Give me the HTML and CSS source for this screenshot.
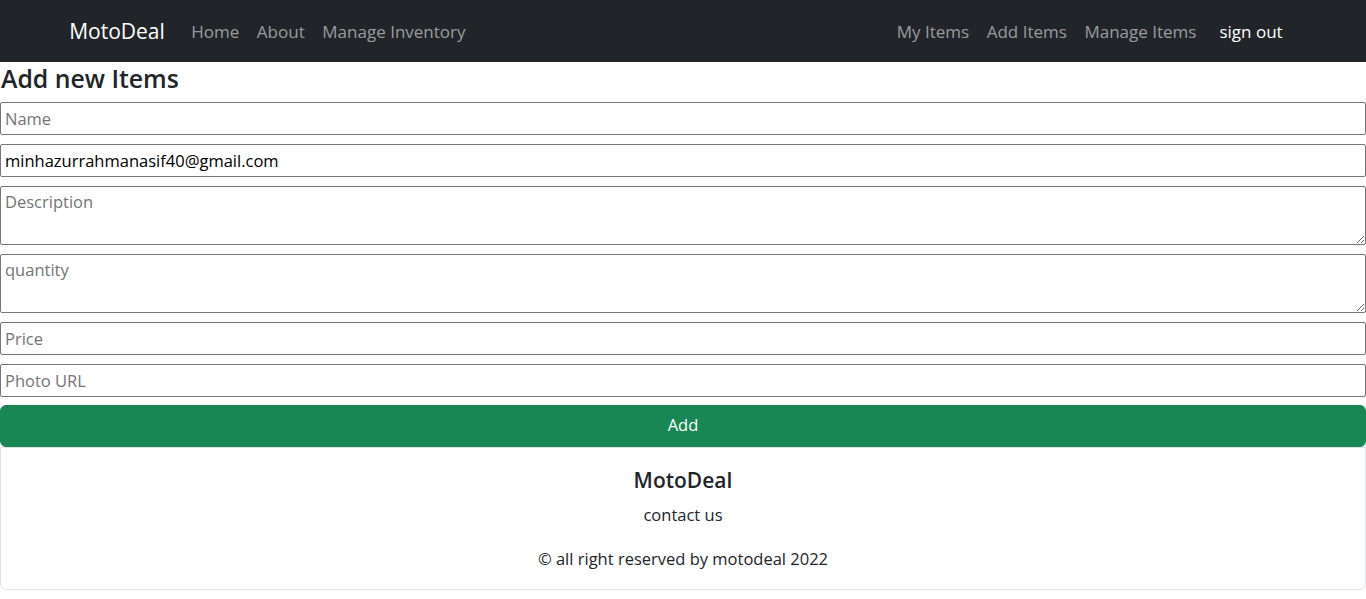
FILE: index.html
```html
<!DOCTYPE html>
<html lang="en">
<head>
<meta charset="utf-8">
<title>MotoDeal - Add new Items</title>
<link rel="stylesheet" href="styles.css">
</head>
<body>
<nav class="navbar">
  <div class="nav-container">
    <a class="brand" href="#">MotoDeal</a>
    <ul class="nav-list">
      <li><a class="nav-link" href="#">Home</a></li>
      <li><a class="nav-link" href="#">About</a></li>
      <li><a class="nav-link" href="#">Manage Inventory</a></li>
    </ul>
    <ul class="nav-list nav-right">
      <li><a class="nav-link" href="#">My Items</a></li>
      <li><a class="nav-link" href="#">Add Items</a></li>
      <li><a class="nav-link" href="#">Manage Items</a></li>
      <li><button class="signout" type="button">sign out</button></li>
    </ul>
  </div>
</nav>
<main class="page">
  <h4 class="title">Add new Items</h4>
  <form class="item-form">
    <input class="field" type="text" placeholder="Name">
    <input class="field" type="email" value="minhazurrahmanasif40@gmail.com">
    <textarea class="field area" placeholder="Description"></textarea>
    <textarea class="field area" placeholder="quantity"></textarea>
    <input class="field" type="text" placeholder="Price">
    <input class="field last-field" type="text" placeholder="Photo URL">
    <button class="add-btn" type="button">Add</button>
  </form>
  <footer class="footer-card">
    <h5 class="footer-title">MotoDeal</h5>
    <p class="footer-text">contact us</p>
    <p class="footer-text last">© all right reserved by motodeal 2022</p>
  </footer>
</main>
</body>
</html>
```
FILE: styles.css
```css
* { box-sizing: border-box; }

html, body {
  margin: 0;
  padding: 0;
}

body {
  font-family: "Open Sans", "Noto Sans", sans-serif;
  font-size: 16.5px;
  line-height: 26.4px;
  color: #212529;
  background: #fff;
}

.navbar {
  background: #212529;
  height: 62px;
  display: flex;
  align-items: center;
}

.nav-container {
  width: 1254px;
  margin: 0 auto;
  padding: 0 13.2px;
  display: flex;
  align-items: center;
}

.brand {
  color: #fff;
  text-decoration: none;
  font-size: 21px;
  margin-right: 17.6px;
  line-height: 33px;
  padding-top: 1px;
}

.nav-list {
  list-style: none;
  margin: 0;
  padding: 0;
  display: flex;
  align-items: center;
}

.nav-right {
  margin-left: auto;
}

.nav-link {
  display: block;
  padding: 9.5px 8.8px 8.1px;
  font-size: 17px;
  color: rgba(255, 255, 255, 0.55);
  text-decoration: none;
}

.signout {
  font: inherit;
  font-size: 17px;
  color: #fff;
  background: transparent;
  border: 1px solid transparent;
  padding: 7.3px 13.2px 5.9px;
  cursor: pointer;
}

.page {
  padding: 0;
}

.title {
  margin: 0 0 8.8px;
  padding: 2px 0 0 1px;
  font-size: 24.8px;
  font-weight: 600;
  line-height: 28.7px;
}

.item-form {
  display: flex;
  flex-direction: column;
}

.field {
  display: block;
  width: 100%;
  height: 33px;
  margin: 0 0 9px;
  padding: 0 4px;
  font: inherit;
  color: #000;
  border: 1px solid #767676;
  border-radius: 2px;
  background: #fff;
}

.field::placeholder {
  color: #757575;
}

.area {
  height: 59px;
  padding-top: 3px;
  line-height: 24px;
}

.last-field {
  margin-bottom: 8px;
}

.add-btn {
  display: block;
  width: 100%;
  height: 42px;
  font: inherit;
  color: #fff;
  background: #198754;
  border: 1px solid #198754;
  border-radius: 6px;
  cursor: pointer;
}

.footer-card {
  border: 1px solid #dee2e6;
  border-radius: 0 0 6px 6px;
  padding: 19.6px 17.6px 16.6px;
  text-align: center;
}

.footer-title {
  margin: 0 0 8.8px;
  font-size: 21px;
  font-weight: 600;
  line-height: 26.4px;
}

.footer-text {
  margin: 0 0 17.6px;
}

.footer-text.last {
  margin-bottom: 0;
}
```
